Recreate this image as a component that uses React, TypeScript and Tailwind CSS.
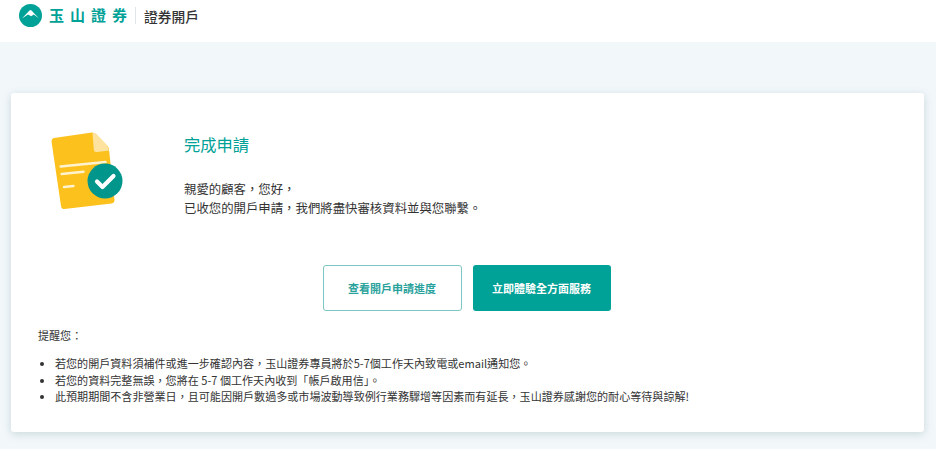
import React from 'react';

const font = { fontFamily: '"Noto Sans CJK TC", "Noto Sans", sans-serif' };

const Logo = () => (
  <svg width="23" height="23" viewBox="0 0 23 23">
    <circle cx="11.5" cy="11.5" r="11.5" fill="#00a196" />
    <path d="M3 14.5 L10.5 6.5 Q11.5 5.5 12.5 6.5 L20 14.5 L14.8 10.6 L12.2 12.2 L9 10.4 Z" fill="#fff" />
  </svg>
);

const DocIcon = () => (
  <svg width="74" height="82" viewBox="0 0 74 82">
    <path d="M3 8 L41 2.5 Q43 2.5 45 4 L56 15.5 Q58 17.5 58 19.5 L63.5 70 Q63.5 73 60.5 73.5 L13.5 79 Q10.5 79.5 10 76 L0.5 11.5 Q0.5 8.5 3 8 Z" fill="#fdc11d" />
    <path d="M41.5 2.5 Q43 2.5 45 4 L56 15.5 Q57.5 17.5 58 20.5 L46 22 Q43 22.5 42.8 19.5 Z" fill="#fee3a0" />
    <path d="M9.5 36.5 L54.5 32" stroke="#fff3cf" strokeWidth="2.4" strokeLinecap="round" />
    <path d="M10.5 44 L32.5 41.8" stroke="#fff3cf" strokeWidth="2.4" strokeLinecap="round" />
    <path d="M13 57 L22.5 56" stroke="#fff3cf" strokeWidth="2.4" strokeLinecap="round" />
    <circle cx="54" cy="51" r="17.5" fill="#00968c" />
    <path d="M46 51.5 L51.5 57 L62.5 46" fill="none" stroke="#fff" strokeWidth="4.2" strokeLinecap="round" strokeLinejoin="round" />
  </svg>
);

export default function App() {
  return (
    <div className="flex h-[449px] w-[936px] flex-col overflow-hidden bg-[#f2f7fa]" style={font}>
      <header className="flex h-[42px] items-start bg-white pl-[19px] pt-[4px]">
        <Logo />
        <span className="ml-[7px] mt-[1px] text-[15px] font-bold leading-[20px] tracking-[6px] text-[#00a196]">玉山證券</span>
        <span className="ml-[2px] mt-[3px] h-[17px] w-px bg-[#dfe5e6]" />
        <span className="ml-[8px] mt-[2px] text-[13.75px] font-medium leading-[20px] text-[#333]">證券開戶</span>
      </header>

      <main className="ml-[11px] mt-[51px] h-[339px] w-[913px] rounded-[3px] bg-white shadow-[0_2px_8px_rgba(60,110,115,0.22)]">
        <section className="flex h-[172px] items-start">
          <div className="ml-[40px] mt-[37px]">
            <DocIcon />
          </div>
          <div className="ml-[59px] mt-[39px]">
            <h1 className="text-[16.25px] font-normal leading-[24px] text-[#00a196]">完成申請</h1>
            <p className="mt-[24px] text-[12.4px] leading-[19px] text-[#333]">
              親愛的顧客，您好，
              <br />
              已收您的開戶申請，我們將盡快審核資料並與您聯繫。
            </p>
          </div>
        </section>

        <div className="flex justify-center gap-[11px] pr-[2px]">
          <button className="h-[46px] w-[139px] rounded-[3px] border border-[#7cc6c4] bg-white text-[11px] font-bold text-[#2aa29c]">
            查看開戶申請進度
          </button>
          <button className="h-[46px] w-[138px] rounded-[3px] bg-[#00a196] text-[11px] font-bold text-white">
            立即體驗全方面服務
          </button>
        </div>

        <div className="ml-[27px] mt-[17px] text-[11.07px] leading-[15px] text-[#333]">
          <p>提醒您：</p>
          <ul className="mt-[12px] list-disc pl-[17px] leading-[16.5px]">
            <li>若您的開戶資料須補件或進一步確認內容，玉山證券專員將於5-7個工作天內致電或email通知您。</li>
            <li>若您的資料完整無誤，您將在 5-7 個工作天內收到「帳戶啟用信」。</li>
            <li>此預期期間不含非營業日，且可能因開戶數過多或市場波動導致例行業務驟增等因素而有延長，玉山證券感謝您的耐心等待與諒解!</li>
          </ul>
        </div>
      </main>
    </div>
  );
}
